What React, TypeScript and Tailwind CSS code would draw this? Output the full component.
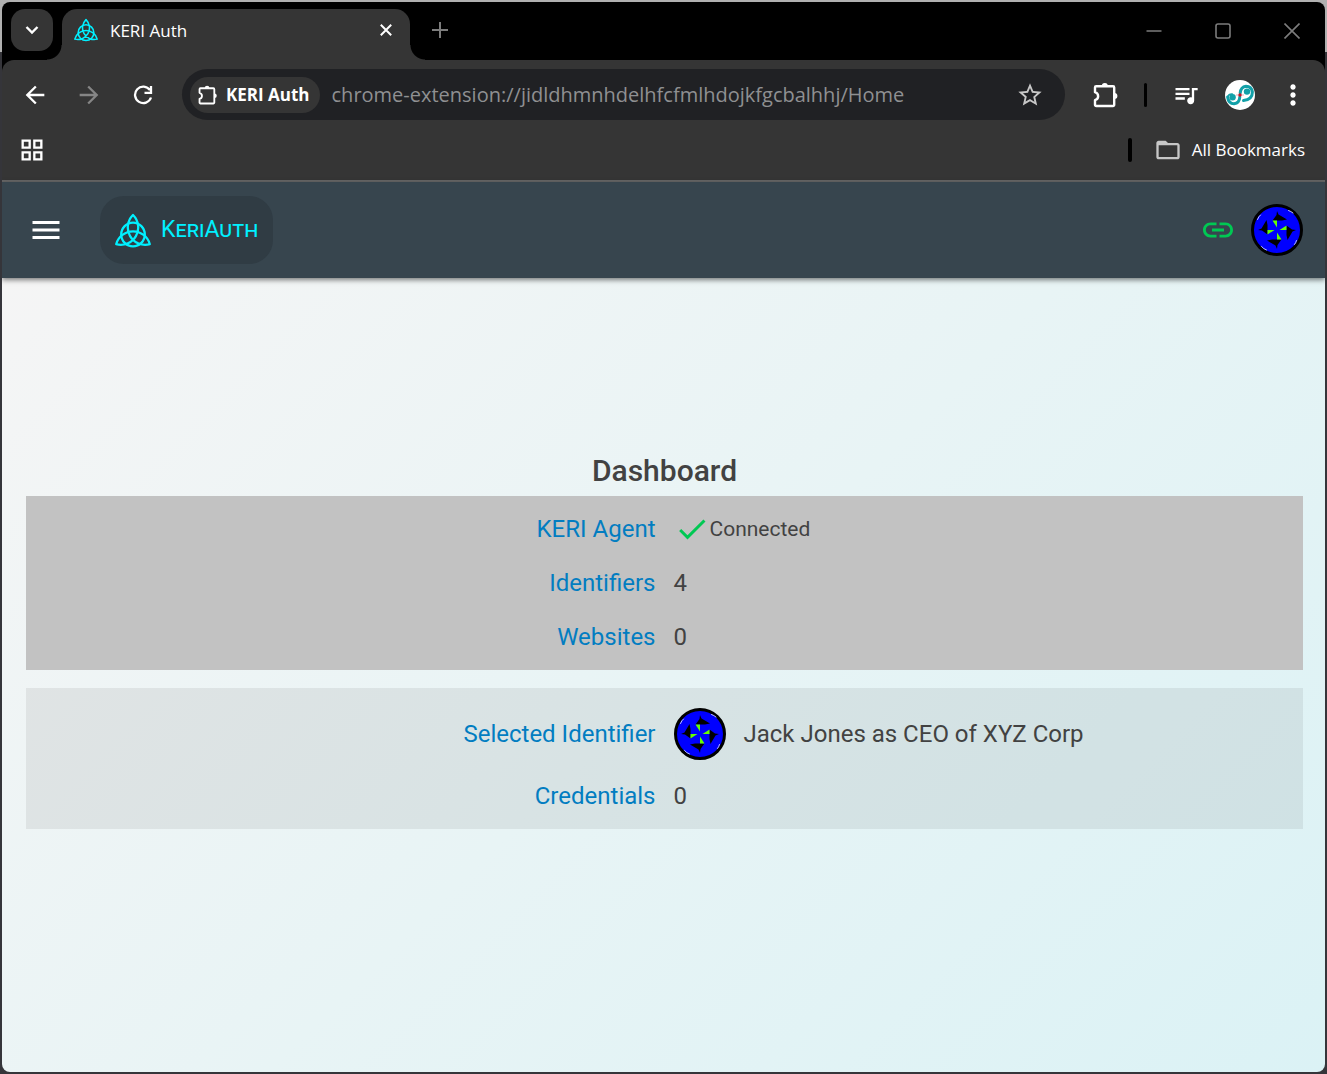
import React from "react";
import {
  MdArrowBack,
  MdArrowForward,
  MdFolderOpen,
  MdCheck,
  MdGridView,
  MdLink,
  MdMenu,
  MdMoreVert,
  MdQueueMusic,
  MdStarOutline,
} from "react-icons/md";

function Triquetra({ className, stroke = 2 }: { className: string; stroke?: number }) {
  return (
    <svg viewBox="0 0 36 35" className={className} fill="none" stroke="#00f0ff" strokeWidth={stroke} strokeLinejoin="round" aria-hidden="true">
      <path d="M1.2 31.2A17.4 17.4 0 0 1 34.8 31.2A17.4 17.4 0 0 1 18 2A17.4 17.4 0 0 1 1.2 31.2Z" />
      <circle cx="18" cy="21.5" r="11.8" />
    </svg>
  );
}

function Puzzle({ className }: { className: string }) {
  return (
    <svg viewBox="0 0 26 26" className={className} aria-hidden="true">
      <path
        d="M3.5 4.2H20a1.2 1.2 0 0 1 1.2 1.2V22.8A1.2 1.2 0 0 1 20 24H3.2A1.2 1.2 0 0 1 2 22.8V18.2C6.2 16.8 6.2 11.6 2 10.2V5.4A1.2 1.2 0 0 1 3.2 4.2Z"
        fill="none"
        stroke="currentColor"
        strokeWidth="2.4"
        strokeLinejoin="round"
      />
      <path d="M8.8 4a3 3 0 0 1 6 0ZM21.4 11a3 3 0 0 1 0 6Z" fill="currentColor" />
    </svg>
  );
}

function IdentityIcon() {
  return (
    <svg viewBox="0 0 52 52" className="size-13 shrink-0" role="img" aria-label="Identifier icon">
      <circle cx="26" cy="26" r="24.5" fill="#0000ff" stroke="#000" strokeWidth="3" />
      <g fill="none" stroke="#c0c0ff" strokeWidth="1" strokeLinecap="round">
        <path d="M6.5 15.5Q7.5 12.5 9.5 11M37.5 6.5Q40 7.3 42 9M45.5 36.5Q44.8 39 43.5 40.5M10.5 42.5Q12.5 45 15.5 46" />
      </g>
      {[0, 90, 180, 270].map((angle) => (
        <g key={angle} transform={`rotate(${angle} 26 26)`}>
          <path d="M26 7L27.5 10.5L36 15.5L31 16.5H21.5L25.5 11Z" fill="#000" />
          <path d="M21.5 16.5H26V23.5Z" fill="#66ff00" />
        </g>
      ))}
    </svg>
  );
}

function ProfileIcon() {
  return (
    <svg viewBox="0 0 30 30" className="size-[30px]" aria-hidden="true">
      <circle cx="15" cy="15" r="15" fill="#fff" />
      <g fill="none" stroke="#12a0a8" strokeWidth="3" strokeLinecap="round">
        <path d="M2.6 17Q3.5 23.8 9 23.8Q14.5 23.2 14.8 17" />
        <path d="M15.2 13Q15.8 6.8 21 6.2Q26.5 6.2 27.4 12Q27.5 19.5 18.5 20.5" />
      </g>
      <circle cx="7.6" cy="17.2" r="3.2" fill="#12a0a8" />
      <circle cx="22" cy="11.6" r="3.2" fill="#12a0a8" />
      <path d="M2.6 17Q4 13.5 8 14.2" fill="none" stroke="#12a0a8" strokeWidth="1.6" />
      <circle cx="15" cy="15" r="1.7" fill="#c2182b" />
      <path d="M11.5 15H18.5" stroke="#c2182b" strokeWidth="0.7" strokeDasharray="1 1" />
    </svg>
  );
}

function TabStrip() {
  return (
    <div className="flex h-[58px] bg-black pr-4">
      <button aria-label="Search tabs" className="mt-[7px] ml-[9px] flex size-[42px] items-center justify-center rounded-[14px] bg-[#353535]">
        <svg viewBox="0 0 14 10" className="h-2.5 w-3.5" fill="none" stroke="#fff" strokeWidth="2.4" aria-hidden="true">
          <path d="M1.5 2L7 7.5L12.5 2" />
        </svg>
      </button>
      <div className="-ml-1.5 size-[15px] self-end bg-[radial-gradient(circle_at_0_0,transparent_14px,#353535_15px)]" />
      <div className="mt-[7px] flex w-[348px] items-start rounded-t-[15px] bg-[#353535] pt-2 pr-[18px] pl-3">
        <Triquetra className="mt-px h-6 w-6" stroke={2.3} />
        <span className="ml-3 flex-1 text-[17px] leading-7 text-white">KERI Auth</span>
        <button aria-label="Close tab" className="mt-[7px] text-white">
          <svg viewBox="0 0 12 12" className="size-3" stroke="currentColor" strokeWidth="2" aria-hidden="true">
            <path d="M0.8 0.8L11.2 11.2M11.2 0.8L0.8 11.2" />
          </svg>
        </button>
      </div>
      <div className="size-[15px] self-end bg-[radial-gradient(circle_at_100%_0,transparent_14px,#353535_15px)]" />
      <button aria-label="New tab" className="mt-5 ml-[7px] size-4 text-[#7c7c7c]">
        <svg viewBox="0 0 16 16" className="size-4" stroke="currentColor" strokeWidth="2" aria-hidden="true">
          <path d="M8 0V16M0 8H16" />
        </svg>
      </button>
      <div className="ml-auto flex items-start gap-[53px] pt-[21px] pr-[9px] text-[#7c7c7c]">
        <button aria-label="Minimize">
          <svg viewBox="0 0 16 16" className="size-4" stroke="currentColor" strokeWidth="1.5" aria-hidden="true">
            <path d="M0.5 8H15.5" />
          </svg>
        </button>
        <button aria-label="Maximize">
          <svg viewBox="0 0 16 16" className="size-4" fill="none" stroke="currentColor" strokeWidth="1.6" aria-hidden="true">
            <rect x="1" y="1" width="14" height="14" rx="2" />
          </svg>
        </button>
        <button aria-label="Close window">
          <svg viewBox="0 0 16 16" className="size-4" stroke="currentColor" strokeWidth="1.6" aria-hidden="true">
            <path d="M0.5 0.5L15.5 15.5M15.5 0.5L0.5 15.5" />
          </svg>
        </button>
      </div>
    </div>
  );
}

function Toolbar() {
  return (
    <div className="bg-black">
      <div className="flex h-[68px] items-center rounded-t-xl bg-[#353535] pt-px pr-4 pl-[19px] text-white">
        <button aria-label="Back"><MdArrowBack className="size-7" /></button>
        <button aria-label="Forward" className="ml-[26px] text-[#858585]"><MdArrowForward className="size-7" /></button>
        <button aria-label="Reload" className="ml-[30px]">
          <svg viewBox="0 0 20 20" className="size-5" fill="none" stroke="currentColor" strokeWidth="2.3" aria-hidden="true">
            <path d="M17 5.2A8.2 8.2 0 1 0 18 12.5M18 1V7.8H11.5" />
          </svg>
        </button>
        <div className="ml-[29px] flex h-[51px] flex-1 items-center rounded-full bg-[#202124] pr-[21px] pl-2">
          <button className="flex h-9 items-center gap-2 rounded-full bg-[#353535] px-2.5 pl-2 text-[17px] font-bold whitespace-nowrap">
            <Puzzle className="size-5" />
            KERI Auth
          </button>
          <input
            aria-label="Address"
            readOnly
            value="chrome-extension://jidldhmnhdelhfcfmlhdojkfgcbalhhj/Home"
            className="ml-3 min-w-0 flex-1 bg-transparent text-[20px] text-[#8f9092] outline-none"
          />
          <button aria-label="Bookmark this page" className="text-[#c7c7c7]"><MdStarOutline className="size-7" /></button>
        </div>
        <button aria-label="Extensions" className="ml-7"><Puzzle className="size-[26px]" /></button>
        <div className="ml-[25px] h-6 w-[3px] rounded-full bg-black" />
        <button aria-label="Media controls" className="ml-[25px]"><MdQueueMusic className="size-7" /></button>
        <button aria-label="Profile" className="ml-[25px]"><ProfileIcon /></button>
        <button aria-label="More" className="ml-[22px]"><MdMoreVert className="size-8" /></button>
      </div>
    </div>
  );
}

function BookmarksBar() {
  return (
    <div className="flex h-[54px] items-center border-b-2 border-[#666] bg-[#353535] pr-5 pb-2 pl-4 text-white">
      <button aria-label="Apps"><MdGridView className="size-7" /></button>
      <div className="ml-auto h-6 w-1 rounded-full bg-black" />
      <button className="ml-[22px] flex items-center gap-[10px] text-[17px]">
        <MdFolderOpen className="size-7 text-[#c7c7c7]" />
        All Bookmarks
      </button>
    </div>
  );
}

function AppBar() {
  return (
    <header className="relative flex h-24 items-center bg-[#37454e] pr-[22px] pl-[26px] shadow-[0_2px_5px_rgba(0,0,0,0.5)]">
      <button aria-label="Menu" className="text-white"><MdMenu className="size-9" /></button>
      <a href="#home" className="ml-9 flex h-[68px] items-center gap-2.5 rounded-[24px] bg-[#303c44] px-[15px] text-[#00f0ff]">
        <Triquetra className="h-[35px] w-9" stroke={2.3} />
        <span className="text-[23px] [font-variant:small-caps]">KeriAuth</span>
      </a>
      <button aria-label="Connection" className="ml-auto text-[#00c853]"><MdLink className="size-9" /></button>
      <button aria-label="Account" className="ml-[15px]"><IdentityIcon /></button>
    </header>
  );
}

function Row({ label, children }: { label: string; children: React.ReactNode }) {
  return (
    <div className="grid grid-cols-2 items-center gap-[18px] py-[9px]">
      <dt className="text-right">
        <a href="#details" className="text-[#027dc1]">{label}</a>
      </dt>
      <dd className="flex items-center">{children}</dd>
    </div>
  );
}

function Dashboard() {
  return (
    <main className="flex-1 bg-[linear-gradient(135deg,#f5f5f5_0%,#e8f4f5_50%,#dbf2f5_100%)] pt-[172px] pr-[22px] pl-6 text-[24px] leading-9 text-[#424242]">
      <h1 className="pb-1 text-center text-[30px] leading-[42px] font-medium">Dashboard</h1>
      <dl className="bg-[#c2c2c2] py-1.5">
        <Row label="KERI Agent">
          <MdCheck className="size-9 text-[#00c853]" />
          <span className="text-[21px]">Connected</span>
        </Row>
        <Row label="Identifiers">4</Row>
        <Row label="Websites">0</Row>
      </dl>
      <dl className="mt-[18px] bg-black/[0.065] pt-[11px] pb-1.5">
        <Row label="Selected Identifier">
          <IdentityIcon />
          <span className="ml-[18px]">Jack Jones as CEO of XYZ Corp</span>
        </Row>
        <Row label="Credentials">0</Row>
      </dl>
    </main>
  );
}

export default function App() {
  return (
    <div className="flex min-h-screen flex-col bg-[linear-gradient(#b0b0b0_52px,#35353a_52px)] p-0.5 font-['Roboto',sans-serif]">
      <div className="flex flex-1 flex-col overflow-hidden rounded-lg">
        <div className="font-['Open_Sans',sans-serif]">
          <TabStrip />
          <Toolbar />
          <BookmarksBar />
        </div>
        <AppBar />
        <Dashboard />
      </div>
    </div>
  );
}
